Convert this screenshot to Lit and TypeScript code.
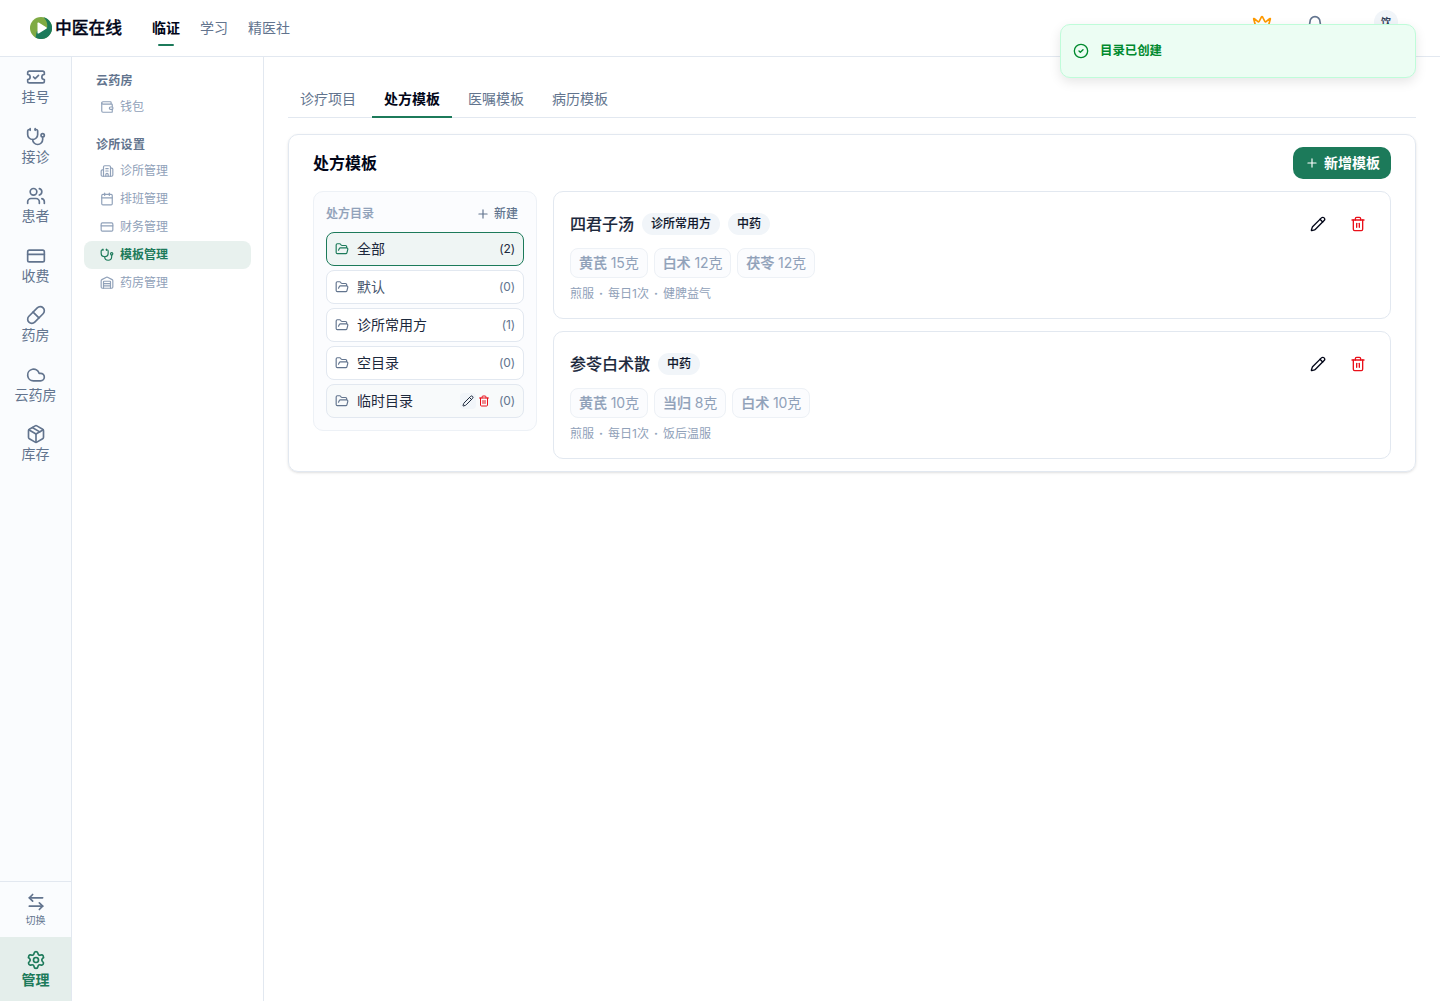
import { LitElement, html, css, svg } from "lit";
import { customElement, property } from "lit/decorators.js";
import { classMap } from "lit/directives/class-map.js";

const ICONS: Record<string, string[]> = {
  ticket: ["M2 9a3 3 0 1 1 0 6v2a2 2 0 0 0 2 2h16a2 2 0 0 0 2-2v-2a3 3 0 1 1 0-6V7a2 2 0 0 0-2-2H4a2 2 0 0 0-2 2Z", "m9 12 2 2 4-4"],
  stethoscope: ["M11 2v2", "M5 2v2", "M5 3H4a2 2 0 0 0-2 2v4a6 6 0 0 0 12 0V5a2 2 0 0 0-2-2h-1", "M8 15a6 6 0 0 0 12 0v-3", "M18 10a2 2 0 1 0 4 0a2 2 0 1 0-4 0"],
  users: ["M16 21v-2a4 4 0 0 0-4-4H6a4 4 0 0 0-4 4v2", "M16 3.128a4 4 0 0 1 0 7.744", "M22 21v-2a4 4 0 0 0-3-3.87", "M5 7a4 4 0 1 0 8 0a4 4 0 1 0-8 0"],
  card: ["M4 5h16a2 2 0 0 1 2 2v10a2 2 0 0 1-2 2H4a2 2 0 0 1-2-2V7a2 2 0 0 1 2-2z", "M2 10h20"],
  pill: ["m10.5 20.5 10-10a4.95 4.95 0 1 0-7-7l-10 10a4.95 4.95 0 1 0 7 7Z", "m8.5 8.5 7 7"],
  cloud: ["M17.5 19H9a7 7 0 1 1 6.71-9h1.79a4.5 4.5 0 1 1 0 9Z"],
  box: ["M11 21.73a2 2 0 0 0 2 0l7-4A2 2 0 0 0 21 16V8a2 2 0 0 0-1-1.73l-7-4a2 2 0 0 0-2 0l-7 4A2 2 0 0 0 3 8v8a2 2 0 0 0 1 1.73z", "M12 22V12", "M3.29 7 12 12l8.71-5", "m7.5 4.27 9 5.15"],
  swap: ["M8 3 4 7l4 4", "M4 7h16", "m16 21 4-4-4-4", "M20 17H4"],
  settings: ["M9.671 4.136a2.34 2.34 0 0 1 4.659 0 2.34 2.34 0 0 0 3.319 1.915 2.34 2.34 0 0 1 2.33 4.033 2.34 2.34 0 0 0 0 3.831 2.34 2.34 0 0 1-2.33 4.033 2.34 2.34 0 0 0-3.319 1.915 2.34 2.34 0 0 1-4.659 0 2.34 2.34 0 0 0-3.32-1.915 2.34 2.34 0 0 1-2.33-4.033 2.34 2.34 0 0 0 0-3.831A2.34 2.34 0 0 1 6.35 6.051a2.34 2.34 0 0 0 3.319-1.915", "M9 12a3 3 0 1 0 6 0a3 3 0 1 0-6 0"],
  wallet: ["M19 7V4a1 1 0 0 0-1-1H5a2 2 0 0 0 0 4h15a1 1 0 0 1 1 1v4h-3a2 2 0 0 0 0 4h3a1 1 0 0 0 1-1v-2a1 1 0 0 0-1-1", "M3 5v14a2 2 0 0 0 2 2h15a1 1 0 0 0 1-1v-4"],
  building: ["M10 12h4", "M10 8h4", "M14 21v-3a2 2 0 0 0-4 0v3", "M6 10H4a2 2 0 0 0-2 2v7a2 2 0 0 0 2 2h16a2 2 0 0 0 2-2V9a2 2 0 0 0-2-2h-2", "M6 21V5a2 2 0 0 1 2-2h8a2 2 0 0 1 2 2v16"],
  calendar: ["M8 2v4", "M16 2v4", "M5 4h14a2 2 0 0 1 2 2v14a2 2 0 0 1-2 2H5a2 2 0 0 1-2-2V6a2 2 0 0 1 2-2z", "M3 10h18"],
  warehouse: ["M18 21V10a1 1 0 0 0-1-1H7a1 1 0 0 0-1 1v11", "M22 19a2 2 0 0 1-2 2H4a2 2 0 0 1-2-2V8a2 2 0 0 1 1.132-1.803l7.95-3.974a2 2 0 0 1 1.837 0l7.948 3.974A2 2 0 0 1 22 8z", "M6 13h12", "M6 17h12"],
  folder: ["m6 14 1.5-2.9A2 2 0 0 1 9.24 10H20a2 2 0 0 1 1.94 2.5l-1.54 6a2 2 0 0 1-1.95 1.5H4a2 2 0 0 1-2-2V5a2 2 0 0 1 2-2h3.9a2 2 0 0 1 1.69.9l.81 1.2a2 2 0 0 0 1.67.9H18a2 2 0 0 1 2 2v2"],
  pencil: ["M21.174 6.812a1 1 0 0 0-3.986-3.987L3.842 16.174a2 2 0 0 0-.5.83l-1.321 4.352a.5.5 0 0 0 .623.622l4.353-1.32a2 2 0 0 0 .83-.497z", "m15 5 4 4"],
  trash: ["M3 6h18", "M19 6v14a2 2 0 0 1-2 2H7a2 2 0 0 1-2-2V6", "M8 6V4a2 2 0 0 1 2-2h4a2 2 0 0 1 2 2v2", "M10 11v6", "M14 11v6"],
  plus: ["M5 12h14", "M12 5v14"],
  check: ["M2 12a10 10 0 1 0 20 0a10 10 0 1 0-20 0", "m9 12 2 2 4-4"],
  crown: ["M11.562 3.266a.5.5 0 0 1 .876 0L15.39 8.87a1 1 0 0 0 1.516.294L21.183 5.5a.5.5 0 0 1 .798.519l-2.834 10.246a1 1 0 0 1-.956.734H5.81a1 1 0 0 1-.957-.734L2.02 6.02a.5.5 0 0 1 .798-.519l4.276 3.664a1 1 0 0 0 1.516-.294z", "M5 21h14"],
  bell: ["M10.268 21a2 2 0 0 0 3.464 0", "M3.262 15.326A1 1 0 0 0 4 17h16a1 1 0 0 0 .74-1.673C19.41 13.956 18 12.499 18 8A6 6 0 0 0 6 8c0 4.499-1.411 5.956-2.738 7.326"],
};

@customElement("ui-icon")
class UiIcon extends LitElement {
  @property() name = "";
  static styles = css`
    :host { display: inline-flex; flex: none; width: 14px; height: 14px; }
    svg { width: 100%; height: 100%; fill: none; stroke: currentColor; stroke-width: 2; stroke-linecap: round; stroke-linejoin: round; }
  `;
  render() {
    return html`<svg viewBox="0 0 24 24">${(ICONS[this.name] ?? []).map((d) => svg`<path d=${d}></path>`)}</svg>`;
  }
}

const RAIL = [
  ["ticket", "挂号"], ["stethoscope", "接诊"], ["users", "患者"], ["card", "收费"],
  ["pill", "药房"], ["cloud", "云药房"], ["box", "库存"],
];
const MENU = [
  { title: "云药房", items: [["wallet", "钱包"]] },
  { title: "诊所设置", items: [["building", "诊所管理"], ["calendar", "排班管理"], ["card", "财务管理"], ["stethoscope", "模板管理"], ["warehouse", "药房管理"]] },
];
const FOLDERS = [
  { name: "全部", count: 2, kind: "active" },
  { name: "默认", count: 0, kind: "muted" },
  { name: "诊所常用方", count: 1, kind: "" },
  { name: "空目录", count: 0, kind: "" },
  { name: "临时目录", count: 0, kind: "hover" },
];
const RECIPES = [
  { name: "四君子汤", tags: ["诊所常用方", "中药"], herbs: [["黄芪", "15"], ["白术", "12"], ["茯苓", "12"]], note: ["煎服", "每日1次", "健脾益气"] },
  { name: "参苓白术散", tags: ["中药"], herbs: [["黄芪", "10"], ["当归", "8"], ["白术", "10"]], note: ["煎服", "每日1次", "饭后温服"] },
];

@customElement("app-root")
class AppRoot extends LitElement {
  static styles = css`
    :host {
      --green: #1c7a5a; --muted: #62748e; --faint: #90a1b9; --ink: #020618; --line: #e2e8f0;
      display: flex; flex-direction: column; height: 1001px; background: #fff; color: var(--ink);
      font: 400 14px/20px Inter, "Noto Sans CJK SC", sans-serif; position: relative; overflow: hidden;
    }
    * { box-sizing: border-box; }
    header { display: flex; height: 57px; flex: none; border-bottom: 1px solid var(--line); padding: 0 42px 0 30px; }
    .brand { display: flex; align-items: center; gap: 3px; width: 122px; font-size: 16.8px; font-weight: 500; -webkit-text-stroke: 0.3px; }
    .logo { width: 22px; height: 22px; flex: none; }
    nav { display: flex; gap: 20px; color: var(--muted); }
    nav span { display: flex; flex-direction: column; align-items: center; padding-top: 18px; }
    nav .on { color: var(--ink); font-weight: 700; }
    nav .on::after { content: ""; width: 16px; height: 2px; border-radius: 1px; background: var(--green); margin-top: 6px; }
    .tools { margin-left: auto; display: flex; align-items: flex-start; }
    .tools ui-icon { width: 20px; height: 20px; }
    .crown { color: #fe9a00; margin: 14px 32.5px 0 0; }
    .bell { color: var(--muted); margin: 15px 49.5px 0 0; }
    .avatar { width: 24px; height: 24px; margin-top: 10px; border-radius: 50%; background: #f1f5f9; color: #314158; font-size: 10px; font-weight: 700; line-height: 25px; text-align: center; }
    .body { display: flex; flex: 1; min-height: 0; }
    .rail { width: 72px; flex: none; display: flex; flex-direction: column; background: #fafcfe; border-right: 1px solid var(--line); color: var(--muted); }
    .rail div { display: flex; flex-direction: column; align-items: center; }
    .rail ui-icon { width: 20px; height: 20px; }
    .rail .item { height: 59.5px; padding-top: 10px; }
    .rail .switch { margin-top: auto; height: 56px; border-top: 1px solid var(--line); padding-top: 10px; font-size: 10px; line-height: 16px; }
    .rail .manage { height: 64px; padding-top: 13px; background: #e4eeeb; color: var(--green); font-weight: 700; }
    aside { width: 192px; flex: none; border-right: 1px solid var(--line); padding: 16px 12px 0; font-size: 12px; line-height: 16px; }
    .group { margin-bottom: 16px; }
    .group h3 { margin: 0 0 4px; padding: 0 12px; font-size: 12px; line-height: 16px; height: 16px; font-weight: 700; letter-spacing: 0.3px; color: var(--muted); }
    .group a { display: flex; align-items: center; gap: 6px; height: 28px; padding: 0 16px; border-radius: 8px; color: var(--faint); }
    .group a.on { background: #e8f1ee; color: var(--green); font-weight: 700; }
    main { flex: 1; min-width: 0; padding: 24px 24px 0; }
    .tabs { display: flex; gap: 4px; height: 37px; border-bottom: 1px solid var(--line); color: var(--muted); }
    .tabs span { padding: 8px 12px 0; height: 37px; }
    .tabs .on { border-bottom: 2px solid var(--green); color: var(--ink); font-weight: 700; }
    .panel { margin-top: 16px; border: 1px solid var(--line); border-radius: 10px; padding: 12px 24px; box-shadow: 0 1px 3px #0000001a, 0 1px 2px -1px #0000001a; }
    .bar { display: flex; align-items: center; justify-content: space-between; height: 32px; margin-bottom: 12px; }
    h2 { margin: 0; font-size: 16px; line-height: 24px; font-weight: 700; }
    .add { display: flex; align-items: center; gap: 5px; width: 98px; height: 32px; padding: 0 0 0 12px; border-radius: 10px; background: var(--green); color: #fff; font-weight: 700; white-space: nowrap; }
    .cols { display: flex; align-items: flex-start; gap: 16px; }
    .dirs { width: 224px; flex: none; display: flex; flex-direction: column; gap: 4px; padding: 12px; border: 1px solid #edf1f6; border-radius: 10px; background: #fbfcfe; }
    .dirhead { display: flex; justify-content: space-between; height: 20px; margin-bottom: 4px; padding-right: 6px; font-size: 12px; line-height: 20px; color: var(--faint); font-weight: 500; }
    .dirhead > span:first-child { -webkit-text-stroke: 0.2px; }
    .new { display: flex; align-items: center; gap: 4px; color: var(--muted); }
    .dir { display: flex; align-items: center; height: 34px; padding: 0 8px; border: 1px solid var(--line); border-radius: 8px; background: #fff; color: #1d293d; }
    .dir > ui-icon { color: var(--muted); margin-right: 8px; }
    .dir.muted { color: #45556c; }
    .dir.hover { background: #f8fafb; }
    .dir.active { border-color: var(--green); background: #eff5f4; }
    .dir.active > ui-icon { color: var(--green); }
    .dir.active .count { color: #1d293d; }
    .count { margin-left: auto; font-size: 12px; letter-spacing: -0.1px; color: var(--muted); }
    .mini { margin-left: auto; display: flex; margin-right: 8px; }
    .mini + .count { margin-left: -0.8px; }
    .mini span { display: flex; align-items: center; justify-content: center; width: 16px; height: 16px; border-radius: 4px; }
    .mini span:first-child { background: #f1f5f9; }
    .mini ui-icon { width: 12px; height: 12px; }
    .list { flex: 1; display: flex; flex-direction: column; gap: 12px; }
    .rx { height: 128px; padding: 16px; border: 1px solid var(--line); border-radius: 10px; display: flex; flex-direction: column; gap: 8px; }
    .top { display: flex; align-items: center; gap: 8px; height: 32px; }
    .name { font-size: 16px; font-weight: 500; color: #1d293d; -webkit-text-stroke: 0.12px; }
    .tag { height: 22px; padding: 0 9px; border-radius: 11px; background: #f1f5f9; font-size: 12px; line-height: 22px; font-weight: 500; color: #0f172b; -webkit-text-stroke: 0.1px; }
    .acts { margin-left: auto; display: flex; gap: 8px; }
    .acts span { width: 32px; height: 32px; display: flex; align-items: center; justify-content: center; }
    .acts ui-icon { width: 16px; height: 16px; }
    .red { color: #e9101a; }
    .herbs { display: flex; gap: 6px; }
    .herb { height: 30px; padding: 0 8px; border: 1px solid #edf1f6; border-radius: 8px; background: #fbfcfe; color: var(--faint); line-height: 28px; white-space: nowrap; letter-spacing: -0.14px; }
    .herb b { font-weight: 500; letter-spacing: 0; -webkit-text-stroke: 0.22px; }
    .note { font-size: 12px; line-height: 16px; color: var(--faint); }
    .dot { padding: 0 1.9px; -webkit-text-stroke: 0.4px; }
    .toast { position: absolute; top: 24px; right: 24px; width: 356px; height: 54px; display: flex; align-items: center; gap: 11px; padding: 0 12px; border: 1px solid #bffcd9; border-radius: 10px; background: #ecfdf3; color: #008a2e; font-size: 12.4px; font-weight: 700; box-shadow: 0 4px 12px #0000001a; }
    .toast ui-icon { width: 16px; height: 16px; }
  `;

  render() {
    return html`
      <header>
        <div class="brand">
          <svg class="logo" viewBox="0 0 22 22">
            <circle cx="11" cy="11" r="11" fill="#7faa43"></circle>
            <path d="M13.500.3A11 11 0 1 1 5.500 20.500C6.500 18.500 6 16.500 6.800 14.500L17 11C18 7 16.500 3 13.500.3Z" fill="#1c7a5a"></path>
            <path d="M7.500 6.300v9.400q0 1.300 1.200.7l7.600-4.600q1.100-.8 0-1.600L8.700 5.600q-1.200-.6-1.200.7Z" fill="#fff"></path>
          </svg>
          <span>中医在线</span>
        </div>
        <nav><span class="on">临证</span><span>学习</span><span>精医社</span></nav>
        <div class="tools">
          <ui-icon class="crown" name="crown"></ui-icon>
          <ui-icon class="bell" name="bell"></ui-icon>
          <span class="avatar">饮</span>
        </div>
      </header>
      <div class="body">
        <div class="rail">
          ${RAIL.map(([icon, label]) => html`<div class="item"><ui-icon name=${icon}></ui-icon><span>${label}</span></div>`)}
          <div class="switch"><ui-icon name="swap"></ui-icon><span>切换</span></div>
          <div class="manage"><ui-icon name="settings"></ui-icon><span>管理</span></div>
        </div>
        <aside>
          ${MENU.map((g) => html`<div class="group"><h3>${g.title}</h3>
            ${g.items.map(([icon, label]) => html`<a class=${classMap({ on: label === "模板管理" })}><ui-icon name=${icon}></ui-icon>${label}</a>`)}
          </div>`)}
        </aside>
        <main>
          <div class="tabs">
            ${["诊疗项目", "处方模板", "医嘱模板", "病历模板"].map((t, i) => html`<span class=${classMap({ on: i === 1 })}>${t}</span>`)}
          </div>
          <section class="panel">
            <div class="bar"><h2>处方模板</h2><div class="add"><ui-icon name="plus"></ui-icon>新增模板</div></div>
            <div class="cols">
              <div class="dirs">
                <div class="dirhead"><span>处方目录</span><span class="new"><ui-icon name="plus"></ui-icon>新建</span></div>
                ${FOLDERS.map((f) => html`<div class="dir ${f.kind}">
                  <ui-icon name="folder"></ui-icon><span>${f.name}</span>
                  ${f.kind === "hover" ? html`<div class="mini"><span><ui-icon name="pencil"></ui-icon></span><span class="red"><ui-icon name="trash"></ui-icon></span></div>` : ""}
                  <span class="count">(${f.count})</span>
                </div>`)}
              </div>
              <div class="list">
                ${RECIPES.map((r) => html`<article class="rx">
                  <div class="top"><span class="name">${r.name}</span>${r.tags.map((t) => html`<span class="tag">${t}</span>`)}
                    <div class="acts"><span><ui-icon name="pencil"></ui-icon></span><span class="red"><ui-icon name="trash"></ui-icon></span></div>
                  </div>
                  <div class="herbs">${r.herbs.map(([n, q]) => html`<span class="herb"><b>${n}</b> ${q}克</span>`)}</div>
                  <div class="note">${r.note.map((n, i) => html`${i ? html` <span class="dot">·</span> ` : ""}${n}`)}</div>
                </article>`)}
              </div>
            </div>
          </section>
        </main>
      </div>
      <div class="toast"><ui-icon name="check"></ui-icon><span>目录已创建</span></div>
    `;
  }
}
